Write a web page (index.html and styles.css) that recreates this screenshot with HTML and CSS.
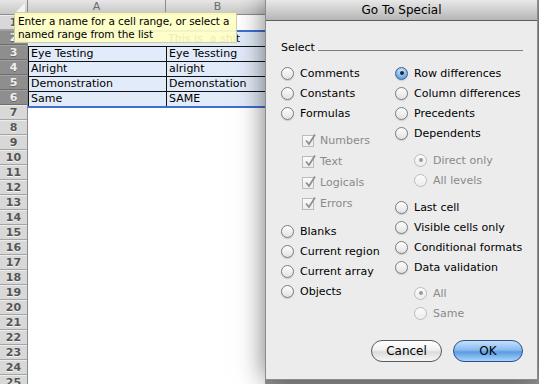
FILE: index.html
```html
<!DOCTYPE html>
<html lang="en">
<head>
  <meta charset="UTF-8">
  <title>Go To Special</title>
  <link rel="stylesheet" href="styles.css">
</head>
<body>
  <div class="window">
    <div class="sheet">
      <div class="col-heads">
        <div class="corner"><span class="corner-tri"></span></div>
        <div class="col-head col-a">A</div>
        <div class="col-head col-b">B</div>
      </div>
      <div class="sheet-body">
        <div class="row-heads">
          <div class="row-head">1</div>
          <div class="row-head sel">2</div>
          <div class="row-head sel">3</div>
          <div class="row-head sel">4</div>
          <div class="row-head sel">5</div>
          <div class="row-head sel">6</div>
          <div class="row-head">7</div>
          <div class="row-head">8</div>
          <div class="row-head">9</div>
          <div class="row-head">10</div>
          <div class="row-head">11</div>
          <div class="row-head">12</div>
          <div class="row-head">13</div>
          <div class="row-head">14</div>
          <div class="row-head">15</div>
          <div class="row-head">16</div>
          <div class="row-head">17</div>
          <div class="row-head">18</div>
          <div class="row-head">19</div>
          <div class="row-head">20</div>
          <div class="row-head">21</div>
          <div class="row-head">22</div>
          <div class="row-head">23</div>
          <div class="row-head">24</div>
          <div class="row-head">25</div>
        </div>
        <div class="cells">
          <div class="row">
            <div class="cell col-a"></div>
            <div class="cell col-b"></div>
          </div>
          <div class="selection">
            <div class="row first">
              <div class="cell col-a"></div>
              <div class="cell col-b">This is &nbsp;a shit</div>
            </div>
            <div class="row boxed">
              <div class="cell col-a">Eye Testing</div>
              <div class="cell col-b">Eye Tessting</div>
            </div>
            <div class="row boxed">
              <div class="cell col-a">Alright</div>
              <div class="cell col-b">alright</div>
            </div>
            <div class="row boxed">
              <div class="cell col-a">Demonstration</div>
              <div class="cell col-b">Demonstation</div>
            </div>
            <div class="row boxed">
              <div class="cell col-a">Same</div>
              <div class="cell col-b">SAME</div>
            </div>
          </div>
        </div>
      </div>
      <div class="tooltip">Enter a name for a cell range, or select a<br>named range from the list</div>
    </div>

    <div class="dialog">
      <div class="title-bar">Go To Special</div>
      <div class="dialog-body">
        <div class="legend"><span>Select</span><span class="legend-line"></span></div>
        <div class="columns">
          <div class="column left">
            <div class="option"><span class="radio"></span>Comments</div>
            <div class="option"><span class="radio"></span>Constants</div>
            <div class="option"><span class="radio"></span>Formulas</div>
            <div class="subgroup checks">
              <div class="option check-row disabled"><span class="check"><svg viewBox="0 0 14 14" width="14" height="14"><path d="M3 7.5 L6 11 L12 1.5" fill="none" stroke="#8e8e8e" stroke-width="1.7"/></svg></span>Numbers</div>
              <div class="option check-row disabled"><span class="check"><svg viewBox="0 0 14 14" width="14" height="14"><path d="M3 7.5 L6 11 L12 1.5" fill="none" stroke="#8e8e8e" stroke-width="1.7"/></svg></span>Text</div>
              <div class="option check-row disabled"><span class="check"><svg viewBox="0 0 14 14" width="14" height="14"><path d="M3 7.5 L6 11 L12 1.5" fill="none" stroke="#8e8e8e" stroke-width="1.7"/></svg></span>Logicals</div>
              <div class="option check-row disabled"><span class="check"><svg viewBox="0 0 14 14" width="14" height="14"><path d="M3 7.5 L6 11 L12 1.5" fill="none" stroke="#8e8e8e" stroke-width="1.7"/></svg></span>Errors</div>
            </div>
            <div class="option"><span class="radio"></span>Blanks</div>
            <div class="option"><span class="radio"></span>Current region</div>
            <div class="option"><span class="radio"></span>Current array</div>
            <div class="option"><span class="radio"></span>Objects</div>
          </div>
          <div class="column right">
            <div class="option"><span class="radio on"></span>Row differences</div>
            <div class="option"><span class="radio"></span>Column differences</div>
            <div class="option"><span class="radio"></span>Precedents</div>
            <div class="option"><span class="radio"></span>Dependents</div>
            <div class="subgroup">
              <div class="option disabled"><span class="radio on"></span>Direct only</div>
              <div class="option disabled"><span class="radio"></span>All levels</div>
            </div>
            <div class="option"><span class="radio"></span>Last cell</div>
            <div class="option"><span class="radio"></span>Visible cells only</div>
            <div class="option"><span class="radio"></span>Conditional formats</div>
            <div class="option"><span class="radio"></span>Data validation</div>
            <div class="subgroup last">
              <div class="option disabled"><span class="radio on"></span>All</div>
              <div class="option disabled"><span class="radio"></span>Same</div>
            </div>
          </div>
        </div>
      </div>
      <div class="buttons">
        <button class="btn cancel">Cancel</button>
        <button class="btn ok">OK</button>
      </div>
    </div>
  </div>
</body>
</html>
```

FILE: styles.css
```css
* {
  box-sizing: border-box;
  margin: 0;
  padding: 0;
}
body, html {
  font-family: 'DejaVu Sans', 'Liberation Sans', sans-serif;
  background-color: #9a9a9a;
  height: 100%;
  overflow: hidden;
}
.window {
  display: flex;
  height: 384px;
}

/* spreadsheet */
.sheet {
  position: relative;
  width: 265px;
  flex: none;
  background-color: #ffffff;
  font-size: 11px;
  overflow: hidden;
}
.col-heads {
  display: flex;
  height: 15px;
  background: linear-gradient(#e6e6e6, #c6c6c6);
  border-bottom: 1px solid #8e8e8e;
}
.corner {
  width: 28px;
  flex: none;
  border-right: 1px solid #8a8a8a;
  position: relative;
}
.corner-tri {
  position: absolute;
  right: 2px;
  bottom: 2px;
  width: 0;
  height: 0;
  border-left: 9px solid transparent;
  border-bottom: 9px solid #f4f4f4;
}
.col-head {
  text-align: center;
  color: #6a6a6a;
  line-height: 14px;
  font-size: 11px;
  border-right: 1px solid #8a8a8a;
}
.col-a {
  width: 138px;
  flex: none;
}
.col-b {
  width: 104px;
  flex: none;
}
.sheet-body {
  display: flex;
}
.row-heads {
  width: 28px;
  flex: none;
  border-right: 1px solid #8a8a8a;
}
.row-head {
  height: 15px;
  line-height: 14px;
  text-align: center;
  font-weight: bold;
  font-size: 11px;
  color: #555555;
  text-shadow: 0 1px 0 #f4f4f4;
  background-color: #d8d8d8;
  border-top: 1px solid #ececec;
  border-bottom: 1px solid #a4a4a4;
}
.row-head.sel {
  background-color: #8e8e8e;
  color: #f0f0f0;
  text-shadow: 0 1px 0 #6a6a6a;
  border-top-color: #a0a0a0;
  border-bottom-color: #6e6e6e;
}
.cells {
  flex: 1;
}
.row {
  display: flex;
  height: 15px;
}
.cell {
  line-height: 14px;
  padding-left: 2px;
  white-space: nowrap;
  overflow: hidden;
  color: #000000;
}
.selection {
  background-color: #e2ebf9;
  border-top: 2px solid #3e70d2;
  border-bottom: 2px solid #3e70d2;
}
.row.first {
  height: 14px;
}
.row.first .cell {
  line-height: 13px;
}
.row.boxed {
  border-top: 1px solid #111111;
}
.row.boxed .cell {
  border-left: 1px solid #111111;
  line-height: 13px;
}
.tooltip {
  position: absolute;
  left: 14px;
  top: 12px;
  width: 223px;
  height: 31px;
  padding: 2px 3px;
  background-color: rgba(255, 255, 196, 0.92);
  border: 1px solid rgba(120, 120, 90, 0.35);
  font-size: 10.5px;
  line-height: 13px;
  letter-spacing: -0.1px;
  white-space: nowrap;
  overflow: hidden;
  color: #000000;
}

/* dialog */
.dialog {
  position: relative;
  z-index: 1;
  width: 273px;
  height: 380px;
  flex: none;
  display: flex;
  flex-direction: column;
  background-color: #ececec;
  border: 1px solid #8c8c8c;
  border-top: none;
  box-shadow: 0 0 26px rgba(0, 0, 0, 0.55);
  font-size: 11px;
  color: #000000;
}
.title-bar {
  height: 21px;
  line-height: 20px;
  text-align: center;
  font-size: 12px;
  background: linear-gradient(#e8e8e8, #b6b6b6);
  border-bottom: 1px solid #5c5c5c;
}
.dialog-body {
  flex: 1;
  padding: 19px 14px 0 15px;
}
.legend {
  display: flex;
  align-items: center;
  height: 14px;
  gap: 3px;
}
.legend-line {
  flex: 1;
  height: 1px;
  margin-top: 6px;
  background-color: #7e7e7e;
}
.columns {
  display: flex;
  margin-top: 9px;
}
.column.left {
  width: 114px;
  flex: none;
}
.column.right {
  flex: 1;
}
.option {
  display: flex;
  align-items: center;
  height: 20px;
  gap: 6px;
  white-space: nowrap;
}
.subgroup {
  margin: 7px 0 7px 19px;
}
.subgroup.last {
  margin-top: 6px;
}
.subgroup.checks {
  margin-left: 21px;
}
.check-row {
  height: 21px;
}
.disabled {
  color: #8a8a8a;
}
.radio {
  width: 13px;
  height: 13px;
  flex: none;
  border-radius: 50%;
  border: 1px solid #7c7c7c;
  background: linear-gradient(#fdfdfd, #e2e2e2);
  box-shadow: 0 1px 1px rgba(0, 0, 0, 0.15);
  display: flex;
  align-items: center;
  justify-content: center;
}
.radio.on {
  border-color: #3f5f93;
  background: radial-gradient(circle at 50% 30%, #d9ebfc, #6aa7ea 70%, #4a8ad8);
}
.radio.on::after {
  content: "";
  width: 4px;
  height: 4px;
  border-radius: 50%;
  background-color: #1c2638;
}
.disabled .radio {
  border-color: #bcbcbc;
  background: linear-gradient(#fbfbfb, #ededed);
  box-shadow: none;
}
.disabled .radio.on::after {
  background-color: #9a9a9a;
}
.check {
  width: 12px;
  height: 12px;
  flex: none;
  border: 1px solid #bbbbbb;
  background: linear-gradient(#fafafa, #ececec);
  position: relative;
}
.check svg {
  position: absolute;
  left: 0;
  top: -3px;
}
.buttons {
  display: flex;
  justify-content: flex-end;
  gap: 11px;
  padding: 0 14px 17px 0;
}
.btn {
  height: 22px;
  border-radius: 11px;
  font-family: 'DejaVu Sans', 'Liberation Sans', sans-serif;
  font-size: 12px;
  color: #000000;
  cursor: pointer;
}
.btn.cancel {
  width: 71px;
  border: 1px solid #5a5a5a;
  background: linear-gradient(#ffffff 0%, #f1f1f1 45%, #dcdcdc 55%, #f6f6f6 100%);
}
.btn.ok {
  width: 70px;
  border: 1px solid #2f4f86;
  background: linear-gradient(#c6e0fa 0%, #86bbf1 45%, #5d9ae3 55%, #a6d4fb 100%);
}
```
